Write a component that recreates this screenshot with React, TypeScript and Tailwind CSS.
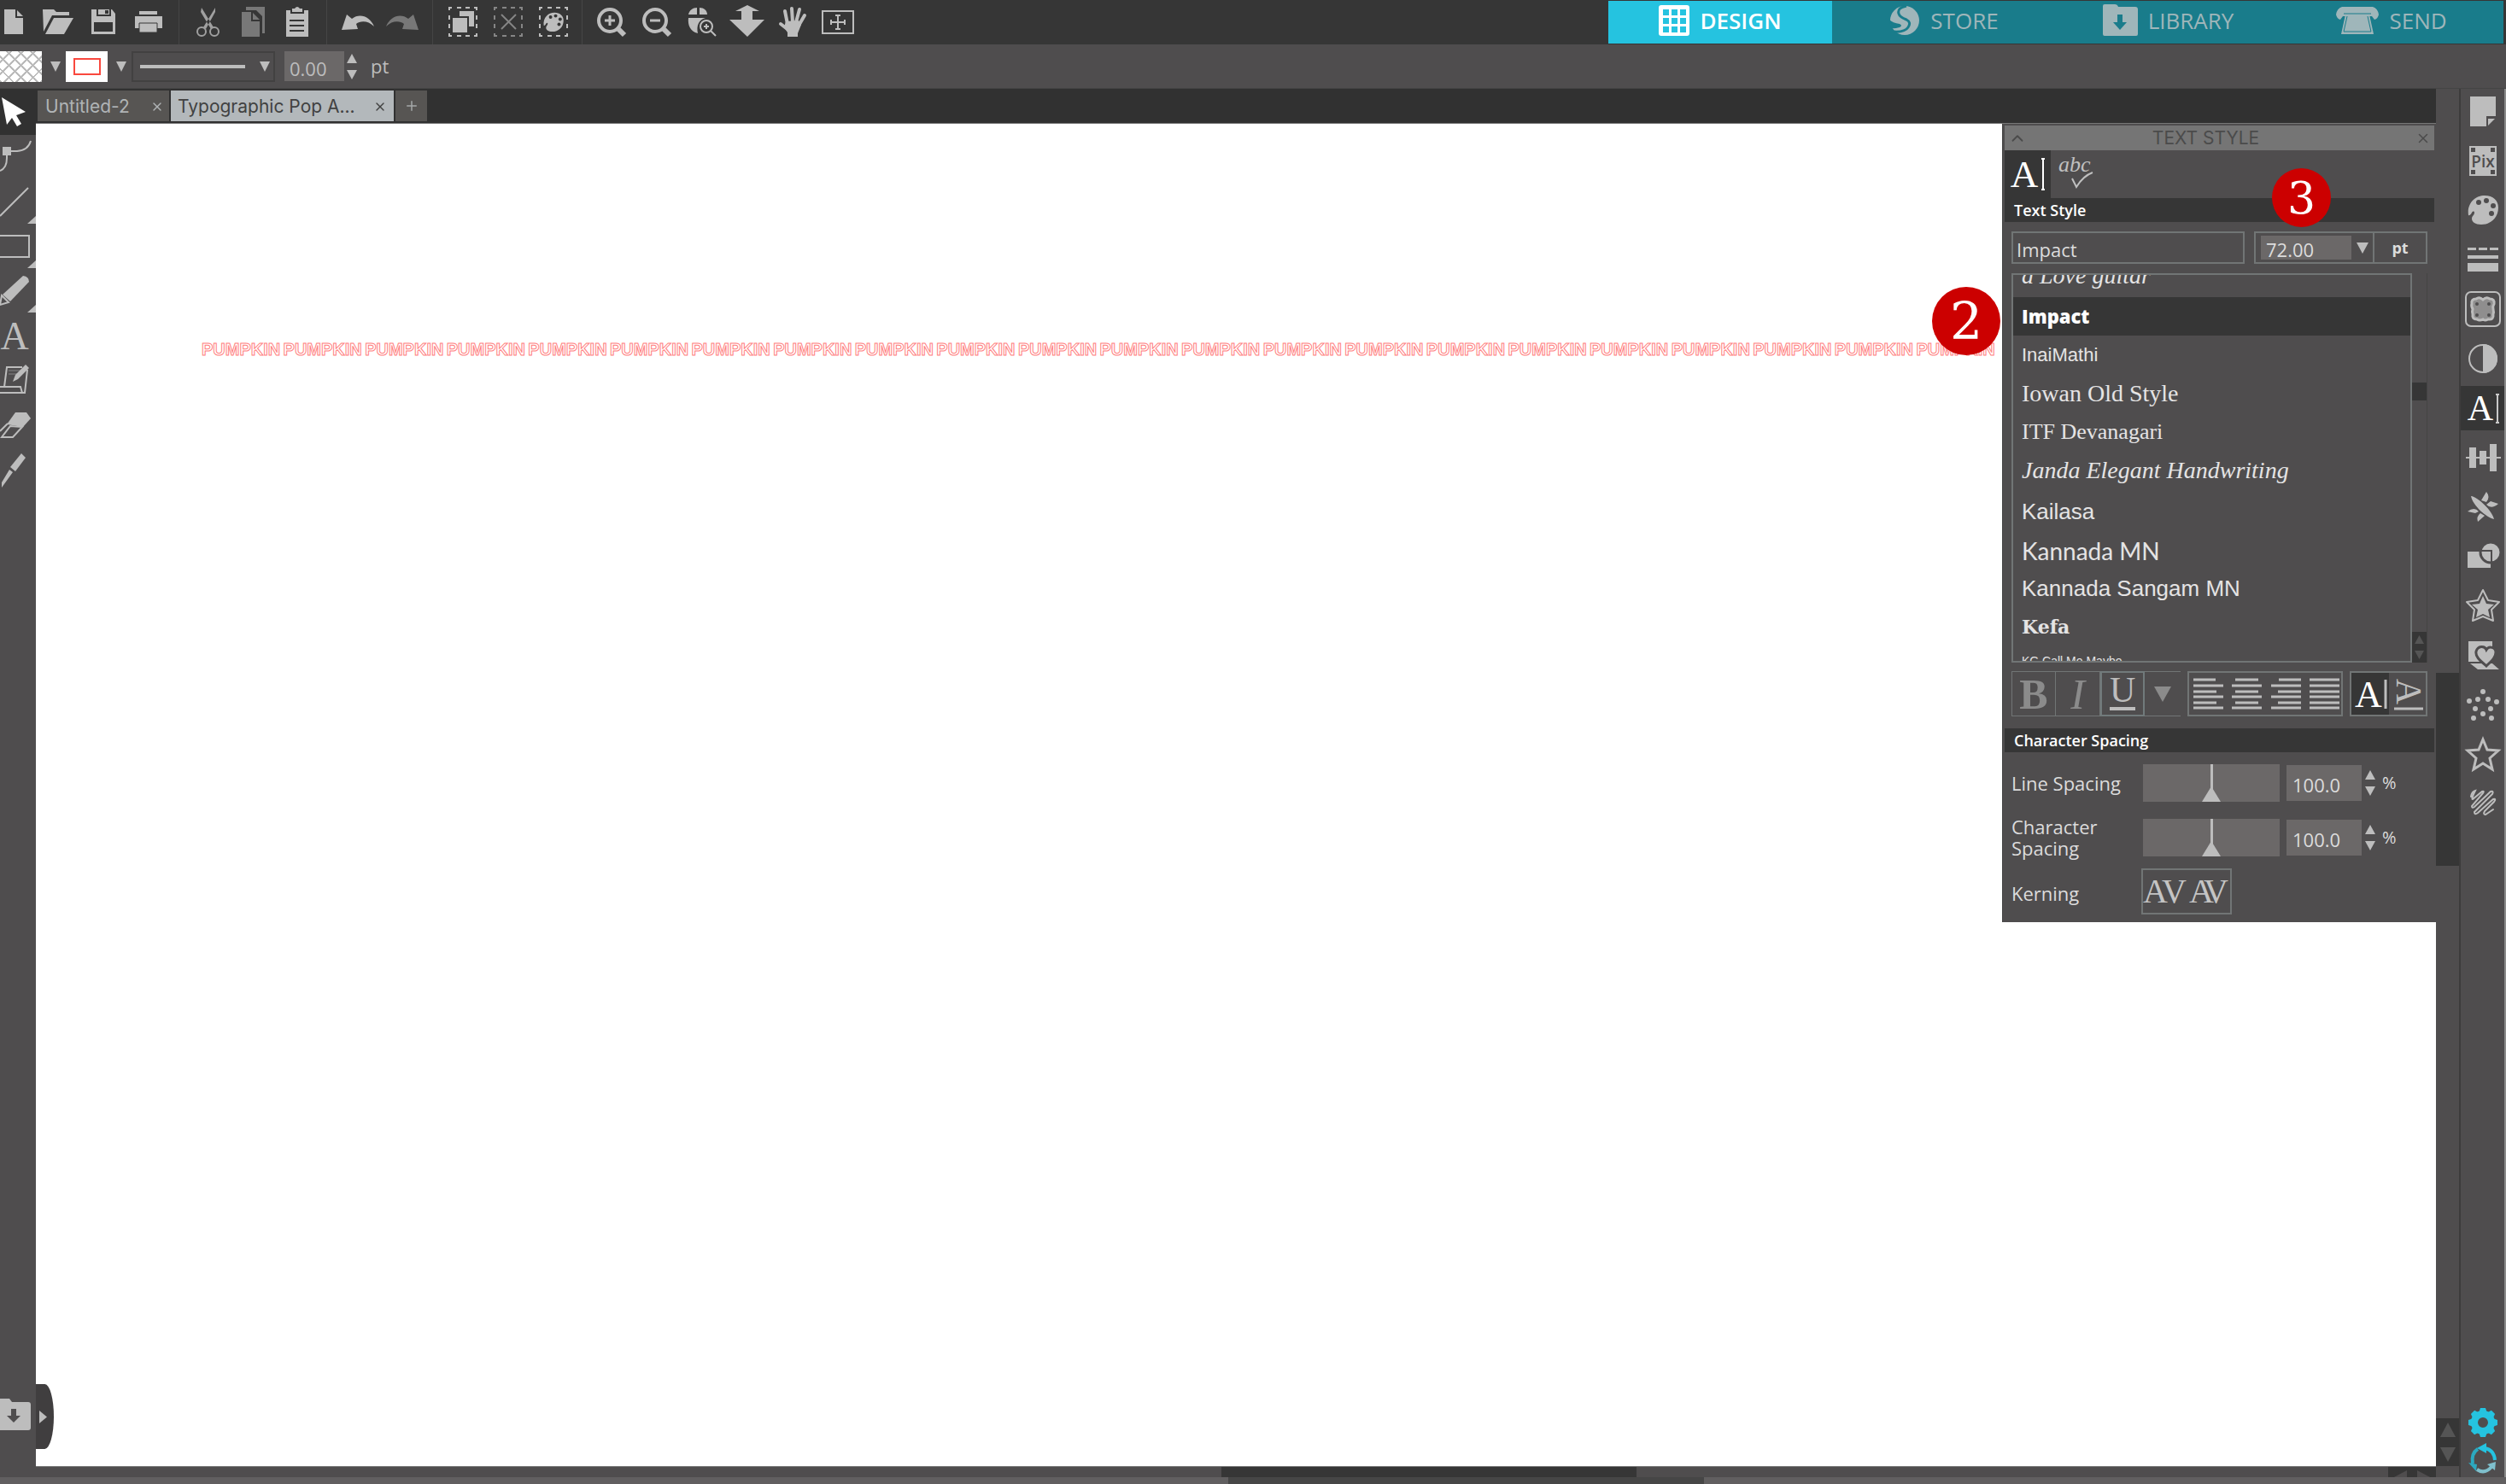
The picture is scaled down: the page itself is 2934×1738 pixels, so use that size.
import { useState } from 'react';
import type { ReactNode } from 'react';
import { ChevronUpIcon, XIcon, PlusIcon } from 'lucide-react';

interface IconProps {
  w?: number;
  h?: number;
  className?: string;
  children: ReactNode;
}

function Icon({ w = 52, h = 52, className = '', children }: IconProps) {
  return (
    <svg
      width={w}
      height={h}
      viewBox={`0 0 ${w} ${h}`}
      fill="currentColor"
      className={`shrink-0 ${className}`}
      aria-hidden="true"
    >
      {children}
    </svg>
  );
}

function Triangle({ dir = 'down', className = 'w-3 h-3' }: { dir?: 'up' | 'down' | 'left' | 'right'; className?: string }) {
  const points = {
    up: '5,0 10,10 0,10',
    down: '0,0 10,0 5,10',
    left: '10,0 10,10 0,5',
    right: '0,0 10,5 0,10',
  };
  return (
    <svg viewBox="0 0 10 10" preserveAspectRatio="none" fill="currentColor" className={`shrink-0 ${className}`} aria-hidden="true">
      <polygon points={points[dir]} />
    </svg>
  );
}

const PALETTE_PATH =
  'M1 24C-1 10 9 1 20 1C30 1 36 7 36 15C36 27 27 35 16 35C9 35 5 32 5 28C5 25 8 24 8 21C8 19 6 19 5 21C4 23 2 25 1 24Z';

function PaletteShape({ hole }: { hole: string }) {
  return (
    <>
      <path d={PALETTE_PATH} />
      <g fill={hole}>
        <circle cx="13" cy="9" r="3" />
        <circle cx="22" cy="7" r="3" />
        <circle cx="30" cy="13" r="3" />
        <circle cx="28" cy="22" r="3" />
      </g>
    </>
  );
}

const D = '#363636';

// Top toolbar, in groups separated by thin dividers
const fileTools = [
  {
    label: 'Open',
    icon: (
      <Icon>
        <path d="M8 11h13l3 3h15v4H19L9 37z" />
        <path d="M21 21h23L33 40H11z" />
      </Icon>
    ),
  },
  {
    label: 'Save',
    icon: (
      <Icon>
        <path d="M13 11h6v8h17v-8h1l4 5v24H13z" />
        <path d="M21 11h13v6H21z" />
        <path d="M29 12h4v4h-4zM16 26h22v11H16z" fill={D} />
      </Icon>
    ),
  },
  {
    label: 'Print',
    icon: (
      <Icon>
        <path d="M17 13h21v4H17zM12 19h32v14H12z" />
        <path d="M17 27h21v11H17z" stroke={D} />
      </Icon>
    ),
  },
];

const clipboardTools = [
  {
    label: 'Cut',
    icon: (
      <Icon className="text-[#a0a0a0]">
        <path d="M18 9l14 23-3 2-12-20zM34 9L20 32l3 2 11-20z" />
        <g fill="none" stroke="currentColor" strokeWidth="2">
          <circle cx="18" cy="37" r="5" />
          <circle cx="33" cy="37" r="5" />
        </g>
      </Icon>
    ),
  },
  {
    label: 'Copy',
    icon: (
      <Icon className="text-[#787878]">
        <path d="M18 8h22v31h-3V19l-7-7H18z" />
        <path d="M13 14h11v11h10v18H13z" />
        <path d="M26 15l8 8h-8z" />
      </Icon>
    ),
  },
  {
    label: 'Paste',
    icon: (
      <Icon>
        <path d="M13 12h5v4h16v-4h5v31H13z" />
        <path d="M20 10h3q3-4 6 0h3v4H20z" />
        <path d="M17 24h17M17 30h17M17 36h17" stroke={D} strokeWidth="2" />
      </Icon>
    ),
  },
];

const ARROW = 'M8 35L14 17L20 22C29 15 41 19 46 31C39 24 30 24 25 28L27 34Z';

const historyTools = [
  {
    label: 'Undo',
    icon: (
      <Icon>
        <path d={ARROW} />
      </Icon>
    ),
  },
  {
    label: 'Redo',
    icon: (
      <Icon className="text-[#787878]">
        <path d={ARROW} transform="matrix(-1 0 0 1 53 0)" />
      </Icon>
    ),
  },
];

const DashedBox = () => (
  <path
    d="M10 12V9h3M19 9h5M29 9h5M39 9h3v3M42 18v5M42 28v5M42 39v3h-3M34 42h-5M24 42h-5M13 42h-3v-3M10 33v-5M10 23v-5"
    fill="none"
    stroke="currentColor"
    strokeWidth="2"
  />
);

const selectTools = [
  {
    label: 'Select all',
    icon: (
      <Icon>
        <DashedBox />
        <path d="M22 13h17v18h-6V19H22zM14 21h17v17H14z" />
      </Icon>
    ),
  },
  {
    label: 'Deselect',
    icon: (
      <Icon className="text-[#858585]">
        <DashedBox />
        <path d="M18 17l17 17M35 17L18 34" stroke="currentColor" strokeWidth="2" />
      </Icon>
    ),
  },
  {
    label: 'Select by color',
    icon: (
      <Icon>
        <DashedBox />
        <g transform="translate(14 14) scale(.66)">
          <PaletteShape hole={D} />
        </g>
      </Icon>
    ),
  },
];

const viewTools = [
  {
    label: 'Zoom in',
    icon: (
      <Icon>
        <g fill="none" stroke="currentColor">
          <circle cx="24" cy="24" r="13" strokeWidth="4" />
          <path d="M18 24h12M24 18v12" strokeWidth="3" />
          <path d="M33 33l8 8" strokeWidth="6" />
        </g>
      </Icon>
    ),
  },
  {
    label: 'Zoom out',
    icon: (
      <Icon>
        <g fill="none" stroke="currentColor">
          <circle cx="24" cy="24" r="13" strokeWidth="4" />
          <path d="M18 24h12" strokeWidth="3" />
          <path d="M33 33l8 8" strokeWidth="6" />
        </g>
      </Icon>
    ),
  },
  {
    label: 'Zoom to selection',
    icon: (
      <Icon>
        <path d="M10 17C11 12 15 9 20 9v8zM23 9c5 0 9 3 9 8h-9zM10 21h20C22 23 19 30 21 39C12 37 9 29 10 21z" />
        <circle cx="31" cy="31" r="7" fill="none" stroke="currentColor" strokeWidth="2" />
        <path d="M28 31h6M31 28v6M36 36l6 6" stroke="currentColor" strokeWidth="2" />
      </Icon>
    ),
  },
  {
    label: 'Fit to window',
    icon: (
      <Icon>
        <path d="M26 6l14 7h-8v10h14L26 43 5 23h14V13h-7z" />
      </Icon>
    ),
  },
  {
    label: 'Pan',
    icon: (
      <Icon>
        <g fill="none" stroke="currentColor" strokeWidth="4" strokeLinecap="round">
          <path d="M20 28L17 13M26 26L25 10M30 26L34 11M33 30L40 18M21 35L12 28" />
        </g>
        <path d="M18 25l15-1 3 5-4 10v4H20v-5l-4-6z" />
      </Icon>
    ),
  },
  {
    label: 'Page view',
    icon: (
      <Icon>
        <rect x="8" y="13" width="36" height="26" fill="none" stroke="currentColor" strokeWidth="2" />
        <path d="M18 26h16M26 18v16M18 23v6M34 23v6M23 18h6M23 34h6" stroke="currentColor" strokeWidth="2" />
      </Icon>
    ),
  },
];

// Drawing tools on the left edge
const FlyoutCorner = () => <path d="M42 43v9H32z" />;

const drawTools = [
  {
    label: 'Edit points',
    icon: (
      <Icon w={42}>
        <path d="M3 14h10v10H3z" />
        <path d="M8 19h12Q33 18 36 7M8 19v8Q8 39 0 42" fill="none" stroke="currentColor" strokeWidth="2" />
      </Icon>
    ),
  },
  {
    label: 'Line',
    icon: (
      <Icon w={42}>
        <path d="M0 43L33 10" stroke="currentColor" strokeWidth="2" />
        <FlyoutCorner />
      </Icon>
    ),
  },
  {
    label: 'Rectangle',
    icon: (
      <Icon w={42}>
        <path d="M0 14h34v25H0" fill="none" stroke="currentColor" strokeWidth="2" />
        <FlyoutCorner />
      </Icon>
    ),
  },
  {
    label: 'Freehand',
    icon: (
      <Icon w={42}>
        <path d="M27 9q7 1 7 7L12 39 3 31z" />
        <path d="M2 32l8 8-10 3z" fill="none" stroke="currentColor" strokeWidth="2" />
        <FlyoutCorner />
      </Icon>
    ),
  },
  {
    label: 'Text',
    icon: (
      <Icon w={42}>
        <text x="17" y="43" textAnchor="middle" fontSize="46" fontFamily="Liberation Serif, serif">
          A
        </text>
      </Icon>
    ),
  },
  {
    label: 'Sketch pad',
    icon: (
      <Icon w={42}>
        <path d="M0 35h24l2 7H0M5 35L8 12h18M32 15l-3 27H0" fill="none" stroke="currentColor" strokeWidth="2" />
        <path d="M10 16h14M10 20h10" stroke="currentColor" strokeWidth="1" opacity=".5" />
        <path d="M30 9l4 4-13 13-6 3 3-8z" />
      </Icon>
    ),
  },
  {
    label: 'Eraser',
    icon: (
      <Icon w={42}>
        <path d="M18 13h13l5 7-9 10-19-3z" />
        <path d="M26 30L15 42H2l10-13zM0 35l9-9" fill="none" stroke="currentColor" strokeWidth="2" />
      </Icon>
    ),
  },
  {
    label: 'Knife',
    icon: (
      <Icon w={42}>
        <path d="M25 9l5 5-12 16-6-5zM11 28l4 3L2 49V43z" />
      </Icon>
    ),
  },
];

const BG = '#4f4d4e';
const STAR = 'M26 8l5 12 13 1-10 9 3 13-11-7-11 7 3-13-10-9 13-1z';

const panelTools = [
  {
    label: 'Page setup',
    icon: (
      <Icon>
        <path d="M11 9h30v23H30v12H11z" />
        <path d="M32 35h8l-8 8z" />
      </Icon>
    ),
  },
  {
    label: 'PixScan',
    icon: (
      <Icon>
        <path d="M10 9h32v35H10z" />
        <g fill={BG}>
          <path d="M12 11h5v5h-5zM35 11h5v5h-5zM12 37h5v5h-5zM35 37h5v5h-5z" />
          <text x="26" y="34" textAnchor="middle" fontSize="19" fontWeight="600" fontFamily="Open Sans, sans-serif">
            Pix
          </text>
        </g>
      </Icon>
    ),
  },
  {
    label: 'Fill',
    icon: (
      <Icon>
        <g transform="translate(8 8)">
          <PaletteShape hole={BG} />
        </g>
      </Icon>
    ),
  },
  {
    label: 'Line style',
    icon: (
      <Icon>
        <path d="M8 12h10v3H8zM21 12h10v3H21zM34 12h10v3H34zM8 21h36v4H8zM8 30h36v10H8z" />
      </Icon>
    ),
  },
  {
    label: 'Trace',
    icon: (
      <Icon>
        <rect x="6" y="6" width="40" height="40" rx="6" fill="none" stroke="currentColor" strokeWidth="2" />
        <path
          d="M18 14q4-3 8 1 4-4 8-1 6 0 5 6-2 3-1 6 1 4 0 6 1 7-6 6-4 2-6 0-4 2-7 0-6 0-5-6-1-3 0-6-2-4-1-6-1-6 5-6z"
          fill="#8f8e8e"
          stroke="currentColor"
          strokeWidth="3"
        />
        <g fill={BG}>
          <circle cx="19" cy="20" r="2" />
          <circle cx="33" cy="20" r="2" />
          <circle cx="19" cy="33" r="2" />
          <circle cx="33" cy="33" r="2" />
        </g>
      </Icon>
    ),
  },
  {
    label: 'Image effects',
    icon: (
      <Icon>
        <circle cx="26" cy="26" r="16" fill="none" stroke="currentColor" strokeWidth="2" />
        <path d="M26 9a17 17 0 0 1 0 34z" />
      </Icon>
    ),
  },
  {
    label: 'Text style',
    icon: (
      <Icon className="text-white">
        <text x="23" y="40" textAnchor="middle" fontSize="42" fontFamily="Liberation Serif, serif">
          A
        </text>
        <path d="M43 10v33M41 10h4M41 43h4" stroke="#c8c8c8" strokeWidth="2" />
      </Icon>
    ),
  },
  {
    label: 'Align',
    icon: (
      <Icon>
        <path d="M6 25h41v2H6zM10 14h8v24h-8zM22 18h8v16h-8zM34 10h8v32h-8z" />
      </Icon>
    ),
  },
  {
    label: 'Replicate',
    icon: (
      <Icon>
        <path d="M12 13C20 14 37 30 39 40C30 38 14 24 12 13zM30 8q5 6 0 12l-6-2zM44 22q-8 7-14 1l5-4zM8 31q8-6 13 0l-4 2zM20 43q-2-6 3-10l5 3z" />
      </Icon>
    ),
  },
  {
    label: 'Modify',
    icon: (
      <Icon>
        <path d="M8 20h27v19H8z" />
        <circle cx="35" cy="21" r="12" stroke={BG} strokeWidth="3" />
        <path d="M23 19h13v13" fill="none" stroke={BG} strokeWidth="2" />
      </Icon>
    ),
  },
  {
    label: 'Offset',
    icon: (
      <Icon>
        <path d="M26 7l6 12 13 2-9 9 2 13-12-5-12 5 2-13-9-9 13-2z" fill="none" stroke="currentColor" strokeWidth="2" strokeLinejoin="round" />
        <path d="M26 14l4 9 9 1-7 6 2 9-8-4-8 4 2-9-7-6 9-1z" />
      </Icon>
    ),
  },
  {
    label: 'Transfer',
    icon: (
      <Icon>
        <path d="M9 9h28v24H9zM11 35h26l8 7H20z" />
        <path
          d="M30 38C22 31 17 27 18 21C20 14 28 14 30 19C33 14 41 16 41 22C41 28 36 32 30 38z"
          stroke={BG}
          strokeWidth="3"
        />
      </Icon>
    ),
  },
  {
    label: 'Rhinestones',
    icon: (
      <Icon>
        {[
          [26, 10],
          [10, 21],
          [20, 19],
          [32, 19],
          [42, 22],
          [17, 30],
          [35, 30],
          [15, 41],
          [26, 36],
          [36, 41],
        ].map(([cx, cy]) => (
          <circle key={`${cx}-${cy}`} cx={cx} cy={cy} r="3" />
        ))}
      </Icon>
    ),
  },
  {
    label: 'Stipple',
    icon: (
      <Icon>
        <path d={STAR} fill="none" stroke="currentColor" strokeWidth="3" />
      </Icon>
    ),
  },
  {
    label: 'Sketch',
    icon: (
      <Icon>
        <path
          d="M12 17Q13 11 17 10Q12 20 14 20L25 11Q28 10 26 13L13 28Q13 31 16 29L35 11Q39 10 37 14L16 35Q16 39 20 36L38 20Q42 19 39 23L28 34Q26 38 29 38L38 32"
          fill="none"
          stroke="currentColor"
          strokeWidth="2"
          strokeLinecap="round"
        />
      </Icon>
    ),
  },
];

const fonts = [
  { name: 'Impact', className: 'font-["Open_Sans"] font-extrabold text-[22px]' },
  { name: 'InaiMathi', className: 'font-["Liberation_Sans"] text-[22px]' },
  { name: 'Iowan Old Style', className: 'font-["Liberation_Serif"] text-[28px]' },
  { name: 'ITF Devanagari', className: 'font-["Liberation_Serif"] text-[26px]' },
  { name: 'Janda Elegant Handwriting', className: 'font-["Liberation_Serif"] italic text-[28px]' },
  { name: 'Kailasa', className: 'font-["Liberation_Sans"] text-[26px] pt-2' },
  { name: 'Kannada MN', className: 'font-["Lato"] text-[28px] pt-2' },
  { name: 'Kannada Sangam MN', className: 'font-["Liberation_Sans"] text-[26px] pt-2' },
  { name: 'Kefa', className: 'font-["DejaVu_Serif"] font-semibold text-[22px] pt-2' },
];

interface Tool {
  label: string;
  icon: ReactNode;
}

function ToolGroup({ tools, className = '' }: { tools: Tool[]; className?: string }) {
  return (
    <div className={`flex ${className}`}>
      {tools.map((tool) => (
        <button key={tool.label} aria-label={tool.label} className="w-[52px] h-full">
          {tool.icon}
        </button>
      ))}
    </div>
  );
}

function Stepper({ label }: { label: string }) {
  return (
    <div className="flex flex-col gap-2 text-[#bdbdbd]">
      <button aria-label={`Increase ${label}`}>
        <Triangle dir="up" className="w-3 h-[11px]" />
      </button>
      <button aria-label={`Decrease ${label}`}>
        <Triangle className="w-3 h-[11px]" />
      </button>
    </div>
  );
}

function NavTabs() {
  const tabs = [
    {
      label: 'DESIGN',
      icon: (
        <Icon w={36} h={36}>
          <path
            fillRule="evenodd"
            d="M3 0h30q3 0 3 3v30q0 3-3 3H3q-3 0-3-3V3q0-3 3-3zM5 5v7h7V5zM15 5v7h7V5zM25 5v7h7V5zM5 15v7h7v-7zM15 15v7h7v-7zM25 15v7h7v-7zM5 25v7h7v-7zM15 25v7h7v-7zM25 25v7h7v-7z"
          />
        </Icon>
      ),
    },
    {
      label: 'STORE',
      icon: (
        <Icon w={36} h={36}>
          <circle cx="18" cy="18" r="17" />
          <path d="M20 1Q9 3 11 10q1 4 9 7 6 3 2 9-4 6-17 5" fill="none" stroke="#197c8b" strokeWidth="3" />
          <path d="M0 17q4 4 12 5 4 2 0 4-7 2-10 1z" fill="#197c8b" />
        </Icon>
      ),
    },
    {
      label: 'LIBRARY',
      icon: (
        <Icon w={42} h={38}>
          <path d="M1 2q0-2 2-2h12q3 0 4 3h20q3 0 3 3v29q0 2-2 2H3q-2 0-2-2z" />
          <path d="M18 12h6v9h5l-8 9-8-9h5z" fill="#197c8b" />
        </Icon>
      ),
    },
    {
      label: 'SEND',
      icon: (
        <Icon w={50} h={34}>
          <path d="M7 1h36q6 2 7 9-1 5-5 6l-3-4H8l-3 4Q1 15 0 10 1 3 7 1z" />
          <path d="M11 10h28l5 23H6z" />
          <path d="M9 9h32M13 12L9 30h32L37 12" fill="none" stroke="#197c8b" strokeWidth="1" />
        </Icon>
      ),
    },
  ];

  return (
    <nav className="ml-auto mr-[3px] flex w-[1048px] h-[50px] mt-px">
      {tabs.map((tab, index) => (
        <a
          key={tab.label}
          href="#"
          className={`flex-1 flex items-center justify-center gap-3 pb-1 font-["Open_Sans",sans-serif] text-[26px] ${
            index === 0 ? 'bg-[#25c3e0] text-white font-semibold' : 'bg-[#197c8b] text-[#9fb6ba]'
          }`}
        >
          {tab.icon}
          {tab.label}
        </a>
      ))}
    </nav>
  );
}

function OptionsBar() {
  return (
    <div className="flex items-center h-[52px] bg-[#4f4d4e] text-[#bdbdbd] border-b border-[#444]">
      <button
        aria-label="Fill color"
        className="w-[49px] h-9 bg-white bg-[repeating-linear-gradient(45deg,#bbb_0_2px,transparent_2px_10px),repeating-linear-gradient(-45deg,#bbb_0_2px,transparent_2px_10px)]"
      />
      <button aria-label="Fill options" className="w-7 flex justify-center pl-1">
        <Triangle />
      </button>
      <button aria-label="Line color" className="w-[49px] h-9 bg-white flex items-center justify-center">
        <span className="w-8 h-5 border-2 border-[#f9483e]" />
      </button>
      <button aria-label="Line options" className="w-7 flex justify-center pl-1">
        <Triangle />
      </button>
      <button aria-label="Line type" className="flex items-center justify-between w-[168px] h-9 pl-2 pr-1 border-2 border-[#424141]">
        <span className="w-[123px] h-1 bg-[#bdbdbd]" />
        <Triangle />
      </button>
      <input
        aria-label="Line thickness"
        defaultValue="0.00"
        className="ml-[11px] w-[70px] h-[35px] px-[6px] pt-1 bg-[#6b6868] text-[22px] font-['Open_Sans',sans-serif]"
      />
      <div className="ml-[3px]">
        <Stepper label="line thickness" />
      </div>
      <span className="ml-4 text-[22px] font-['Open_Sans',sans-serif]">pt</span>
    </div>
  );
}

function DocumentTabs() {
  return (
    <div className="flex h-[41px] pl-[2px] pt-[2px] pb-[2px] gap-[2px] bg-[#313131] font-['Inter',sans-serif] text-[21px] border-b border-[#777]">
      <div className="flex items-center justify-between w-[154px] pl-[9px] pr-[6px] pt-[2px] bg-[#575553] text-[#b0b4b6]">
        <button>Untitled-2</button>
        <button aria-label="Close Untitled-2">
          <XIcon className="w-4 h-4" />
        </button>
      </div>
      <div className="flex items-center justify-between w-[261px] pl-2 pr-2 pt-[2px] bg-[#b3b8bb] text-[#414141]">
        <button>Typographic Pop A...</button>
        <button aria-label="Close Typographic Pop A...">
          <XIcon className="w-4 h-4" />
        </button>
      </div>
      <button aria-label="New document" className="flex items-center justify-center w-[37px] bg-[#575553] text-[#a5a8a9]">
        <PlusIcon className="w-[18px] h-[18px]" />
      </button>
    </div>
  );
}

function SpacingRow({ id, label }: { id: string; label: string }) {
  return (
    <div className="flex items-center h-16">
      <label htmlFor={id} className="w-[154px] pr-6 leading-[25px]">
        {label}
      </label>
      <input
        type="range"
        aria-label={label}
        min={0}
        max={200}
        defaultValue={100}
        className="w-40 h-11 appearance-none bg-[#6b6868] bg-[linear-gradient(#bdbdbd,#bdbdbd)] bg-[length:3px_100%] bg-center bg-no-repeat [&::-webkit-slider-runnable-track]:h-11 [&::-webkit-slider-thumb]:appearance-none [&::-webkit-slider-thumb]:w-[22px] [&::-webkit-slider-thumb]:h-[18px] [&::-webkit-slider-thumb]:mt-[26px] [&::-webkit-slider-thumb]:bg-[#bdbdbd] [&::-webkit-slider-thumb]:[clip-path:polygon(50%_0,100%_100%,0_100%)]"
      />
      <input id={id} defaultValue="100.0" className="ml-2 w-[88px] h-[42px] px-[7px] pt-1 bg-[#6b6868] text-[22px]" />
      <div className="ml-1">
        <Stepper label={label} />
      </div>
      <span className="ml-2 text-[20px]">%</span>
    </div>
  );
}

const alignments = [
  { label: 'Align left', d: 'M0 2h26M0 9h35M0 16h27M0 22h35M0 29h27M0 35h35' },
  { label: 'Align center', d: 'M4 2h27M0 9h35M4 16h27M0 22h35M4 29h27M0 35h35' },
  { label: 'Align right', d: 'M9 2h26M0 9h35M8 16h27M0 22h35M8 29h27M0 35h35' },
  { label: 'Justify', d: 'M0 2h35M0 9h35M0 16h35M0 22h35M0 29h35M0 35h35' },
];

function TextStylePanel() {
  const [selected, setSelected] = useState('Impact');

  return (
    <section className="absolute top-0 right-0 w-[508px] h-[935px] pt-[2px] px-[2px] bg-[#4f4d4e] border-l border-[#444] text-[#dcdcdc] font-['Open_Sans',sans-serif] text-[22px]">
      <header className="flex items-center h-[29px] px-1 bg-[#757575] text-[#4b4b4b]">
        <button aria-label="Collapse panel">
          <ChevronUpIcon className="w-[22px] h-[22px]" />
        </button>
        <h2 className="flex-1 pr-9 text-center font-['Inter',sans-serif] text-[21px] leading-[28px]">TEXT STYLE</h2>
        <button aria-label="Close panel">
          <XIcon className="w-[18px] h-[18px]" />
        </button>
      </header>

      <div className="flex h-14">
        <button aria-label="Text style" className="w-[54px] bg-[#363636] text-white">
          <Icon w={54} h={56}>
            <text x="23" y="43" textAnchor="middle" fontSize="45" fontFamily="Liberation Serif, serif">
              A
            </text>
            <path d="M45 10v36M43 10h4M43 46h4" stroke="currentColor" strokeWidth="2" />
          </Icon>
        </button>
        <button aria-label="Spell check" className="w-[54px]">
          <Icon w={54} h={56} className="text-[#c0c0c0]">
            <text x="9" y="25" fontSize="26" fontStyle="italic" fontFamily="Liberation Serif, serif">
              abc
            </text>
            <path d="M25 33l5 10Q38 30 49 26" fill="none" stroke="currentColor" strokeWidth="2" />
          </Icon>
        </button>
      </div>

      <h3 className="h-7 pl-[11px] leading-7 bg-[#363636] text-white text-[18px] font-semibold">Text Style</h3>

      <div className="flex h-[38px] mt-[11px] ml-[8px]">
        <input
          aria-label="Font name"
          value={selected}
          readOnly
          className="w-[273px] px-1 pt-1 border-2 border-[#717575] text-[22px]"
        />
        <div className="flex items-center ml-[11px] w-[141px] pl-[6px] border-2 border-[#717575]">
          <input aria-label="Font size" defaultValue="72.00" className="w-[106px] h-7 px-[6px] pt-1 bg-[#6b6868] text-[22px]" />
          <button aria-label="Font size list" className="ml-[6px] text-[#bdbdbd]">
            <Triangle className="w-[14px] h-[13px]" />
          </button>
        </div>
        <button className="w-[62px] border-2 border-l-0 border-[#717575] text-[18px] font-bold">pt</button>
      </div>

      <div className="flex h-[456px] mt-[11px] ml-[8px]">
        <ul className="w-[469px] border-2 border-[#717575] overflow-hidden text-white/85">
          <li className="flex items-end h-[26px] pl-[10px] pb-[10px]">
            <button className="font-['Liberation_Serif'] italic text-[28px] leading-[30px]">a Love guitar</button>
          </li>
          {fonts.map((font) => (
            <li key={font.name}>
              <button
                onClick={() => setSelected(font.name)}
                className={`flex items-center w-full h-[45px] pl-[10px] whitespace-nowrap ${font.className} ${
                  selected === font.name ? 'bg-[#363636] text-white' : ''
                }`}
              >
                {font.name}
              </button>
            </li>
          ))}
          <li className="pl-[10px] pt-2">
            <button className="block font-['Liberation_Sans'] text-[14px] leading-[26px]">KG Call Me Maybe</button>
          </li>
        </ul>
        <div className="flex flex-col w-[18px] border-r border-[#444]">
          <div className="h-[128px]" />
          <div className="h-[21px] bg-[#363636]" />
          <div className="flex flex-col items-center justify-center gap-2 h-9 mt-auto bg-[#363636] text-[#555]">
            <Triangle dir="up" className="w-[11px] h-[10px]" />
            <Triangle className="w-[11px] h-[10px]" />
          </div>
        </div>
      </div>

      <div className="flex ml-[8px] mt-[10px] h-[53px] font-['Liberation_Serif']">
        <button aria-label="Bold" className="w-[52px] border border-[#717575] text-[#8b8b8b] font-bold text-[50px] leading-none">
          B
        </button>
        <button aria-label="Italic" className="w-[52px] border border-l-0 border-[#717575] text-[#8b8b8b] italic text-[50px] leading-none">
          I
        </button>
        <button aria-label="Underline" className="flex flex-col items-center w-[52px] border-2 border-[#717a7b] text-[#bdbdbd] text-[42px] leading-[40px]">
          <span className="border-b-4 border-[#bdbdbd] w-[30px]">U</span>
        </button>
        <button aria-label="Underline options" className="flex items-center justify-center w-[42px] border-y border-[#717575] text-[#8b8b8b]">
          <Triangle className="w-5 h-[18px]" />
        </button>
        <div className="flex items-center justify-between ml-2 w-[182px] pl-[5px] pr-[2px] border-2 border-[#717575] text-[#bdbdbd]">
          {alignments.map((item) => (
            <button key={item.label} aria-label={item.label}>
              <Icon w={35} h={37}>
                <path d={item.d} stroke="currentColor" strokeWidth="3" />
              </Icon>
            </button>
          ))}
        </div>
        <div className="flex ml-[8px] w-[91px] border-2 border-[#717575]">
          <button aria-label="Horizontal text" className="w-11 bg-[#363636] text-white">
            <Icon w={44} h={49}>
              <text x="20" y="40" textAnchor="middle" fontSize="44" fontFamily="Liberation Serif, serif">
                A
              </text>
              <path d="M40 8v34" stroke="#bdbdbd" strokeWidth="3" />
            </Icon>
          </button>
          <button aria-label="Vertical text" className="w-[43px] text-[#bdbdbd]">
            <Icon w={43} h={49}>
              <text x="0" y="0" transform="translate(9 22) rotate(90)" textAnchor="middle" fontSize="42" fontFamily="Liberation Serif, serif">
                A
              </text>
              <path d="M6 42h34" stroke="currentColor" strokeWidth="3" />
            </Icon>
          </button>
        </div>
      </div>

      <h3 className="mt-[14px] h-7 pl-[11px] leading-7 bg-[#363636] text-white text-[18px] font-semibold">Character Spacing</h3>

      <div className="mt-1 pl-[8px]">
        <SpacingRow id="line-spacing" label="Line Spacing" />
        <SpacingRow id="character-spacing" label="Character Spacing" />
        <div className="flex items-center mt-1 h-[54px]">
          <span className="w-[152px] pt-1">Kerning</span>
          <button aria-label="Kerning" className="w-[106px] h-[54px] border-2 border-[#717575] text-[#c4c4c4]">
            <Icon w={102} h={50}>
              <g fontSize="40" fontFamily="Liberation Serif, serif">
                <text x="0" y="38">A</text>
                <text x="22" y="38">V</text>
                <text x="54" y="38">A</text>
                <text x="71" y="38">V</text>
              </g>
            </Icon>
          </button>
        </div>
      </div>
    </section>
  );
}

function Canvas() {
  return (
    <main className="relative flex-1 overflow-hidden bg-white">
      <p className="grid grid-cols-[repeat(22,minmax(0,1fr))] w-[2103px] ml-[194px] mt-[248px] font-['Liberation_Sans',sans-serif] font-bold text-[20px] leading-[32px] text-transparent [-webkit-text-stroke:1px_#ff8080]">
        {Array.from({ length: 22 }, (_, index) => (
          <span key={index}>PUMPKIN</span>
        ))}
      </p>

      <button
        aria-label="Show library"
        className="absolute left-0 bottom-[20px] flex items-center w-[21px] h-[76px] pl-1 rounded-r-[100%] bg-[#403e3f] text-[#bdbdbd]"
      >
        <Triangle dir="right" className="w-[9px] h-[15px]" />
      </button>

      <TextStylePanel />

      {/* Numbered callouts */}
      <span className="absolute right-[510px] top-[191px] flex items-center justify-center size-20 rounded-full bg-[#cc0000] text-white text-[60px] leading-none font-['DejaVu_Serif',serif]">
        2
      </span>
      <span className="absolute right-[123px] top-[52px] flex items-center justify-center size-[69px] rounded-full bg-[#cc0000] text-white text-[52px] leading-none font-['DejaVu_Serif',serif]">
        3
      </span>
    </main>
  );
}

export default function App() {
  return (
    <div className="flex flex-col h-screen bg-[#4f4d4e] overflow-hidden">
      <header className="flex h-[52px] bg-[#363636] text-[#bdbdbd]">
        <div className="flex h-[52px]">
          <div className="flex pr-[11px]">
            <button aria-label="New" className="w-[42px]">
              <Icon w={42}>
                <path d="M5 11h13v10h9v19H5z" />
                <path d="M20 12l7 7h-7z" />
              </Icon>
            </button>
            <ToolGroup tools={fileTools} />
          </div>
          <ToolGroup tools={clipboardTools} className="border-l border-[#454545] px-2" />
          <ToolGroup tools={historyTools} className="border-l border-[#454545] gap-px pl-[9px] pr-[9px]" />
          <ToolGroup tools={selectTools} className="border-l border-[#454545] gap-px pl-[9px] pr-[7px]" />
          <ToolGroup tools={viewTools} className="border-l border-[#454545] gap-px pl-2" />
        </div>
        <NavTabs />
      </header>

      <OptionsBar />

      <div className="flex flex-1 min-h-0">
        <aside className="flex flex-col w-[42px] text-[#bdbdbd]">
          <button aria-label="Select" className="h-[54px] bg-[#313131] text-white">
            <Icon w={42}>
              <path d="M2 9l28 17-11 4 6 10-5 3-6-10-6 8z" />
            </Icon>
          </button>
          {drawTools.map((tool) => (
            <button key={tool.label} aria-label={tool.label} className="h-[52px]">
              {tool.icon}
            </button>
          ))}
          <button aria-label="Library" className="mt-auto mb-[47px]">
            <Icon w={42} h={52}>
              <path d="M0 7h11l3 4h19q3 0 3 3v27q0 3-3 3H0z" />
              <path d="M13 19h6v8h5l-8 8-8-8h5z" fill={BG} />
            </Icon>
          </button>
        </aside>

        <div className="flex flex-col flex-1 min-w-0">
          <DocumentTabs />
          <Canvas />
          <div className="flex h-[13px] border-t border-[#777]">
            <div className="w-[49.4%]" />
            <div className="w-[17.3%] bg-[#363636]" />
            <div className="flex justify-center gap-3 ml-auto w-14 pt-1 bg-[#363636] text-[#4f4d4e] overflow-hidden">
              <Triangle dir="left" className="w-[17px] h-[18px]" />
              <Triangle dir="right" className="w-[17px] h-[18px]" />
            </div>
          </div>
        </div>

        <div className="flex flex-col w-[27px] pb-[13px]">
          <div className="h-[42.4%]" />
          <div className="h-[14%] bg-[#363636]" />
          <div className="flex flex-col items-center justify-center gap-3 h-14 mt-auto bg-[#363636] text-[#555]">
            <Triangle dir="up" className="w-[18px] h-[17px]" />
            <Triangle className="w-[18px] h-[17px]" />
          </div>
        </div>

        <aside className="flex flex-col gap-[6px] w-[55px] border-l-2 border-l-[#3d3c3c] border-r-2 border-r-[#8a8a8a] text-[#bdbdbd]">
          {panelTools.map((tool) => (
            <button
              key={tool.label}
              aria-label={tool.label}
              className={`h-[52px] ${tool.label === 'Text style' ? 'bg-[#363636]' : ''}`}
            >
              {tool.icon}
            </button>
          ))}
          <button aria-label="Preferences" className="mt-auto flex justify-center text-[#25c3e0]">
            <Icon w={36} h={36}>
              <circle cx="18" cy="18" r="10" fill="none" stroke="currentColor" strokeWidth="8" />
              {[0, 45, 90, 135, 180, 225, 270, 315].map((angle) => (
                <path key={angle} d="M15 1h6l2 6H13z" transform={`rotate(${angle} 18 18)`} />
              ))}
            </Icon>
          </button>
          <button aria-label="Updates" className="mb-1 flex justify-center text-[#25c3e0]">
            <Icon w={36} h={36}>
              <g fill="none" strokeWidth="4">
                <path d="M20 6Q31 8 32 20" stroke="#25c3e0" />
                <path d="M12 7Q4 12 6 24" stroke="#2ca9c0" />
                <path d="M11 31Q20 37 28 28" stroke="#7fbfcc" />
              </g>
              <path d="M11 6l11-6v12z" />
              <path d="M1 23l10 2-1 8z" fill="#2ca9c0" />
              <path d="M23 25l10-3-1 10z" fill="#7fbfcc" />
            </Icon>
          </button>
        </aside>
      </div>

      <footer className="flex h-2 bg-[#615f60]">
        <div className="w-[49%]" />
        <div className="w-[19%] bg-[#464646]" />
      </footer>
    </div>
  );
}
